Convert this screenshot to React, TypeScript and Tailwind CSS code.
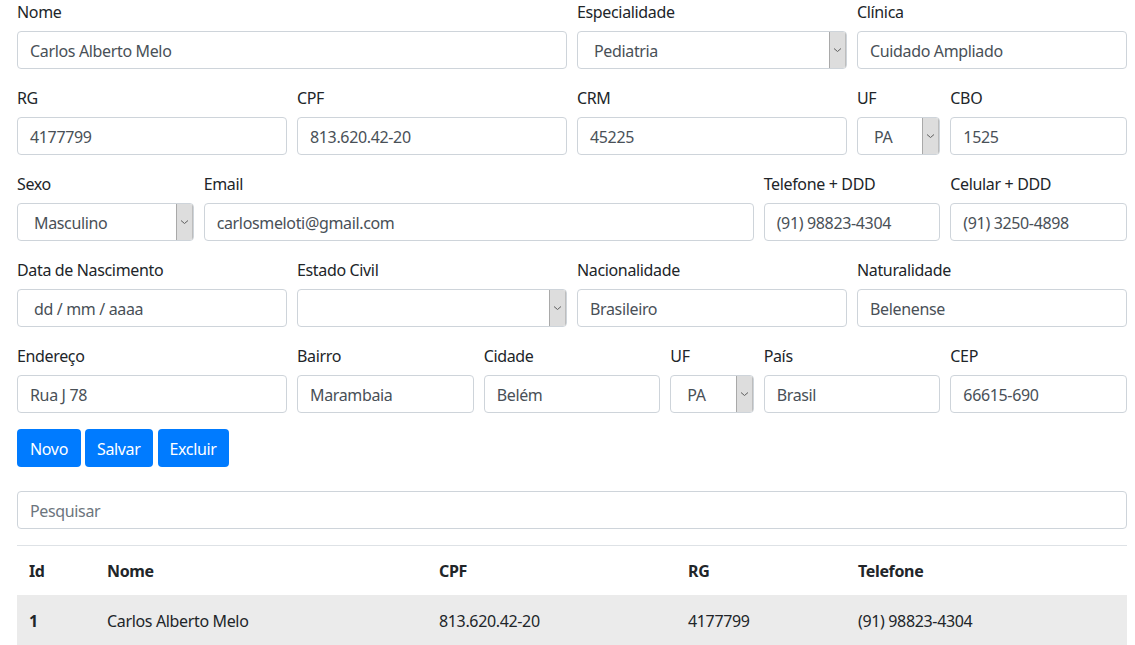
import React from "react";

const font = { fontFamily: '"Segoe UI", "Noto Sans", sans-serif', letterSpacing: "-0.35px" };

function Label({ children }: { children: React.ReactNode }) {
  return <label className="block h-[24px] leading-[24px] mb-[7px] text-[16px] text-[#212529]">{children}</label>;
}

function Input({ value, placeholder }: { value?: string; placeholder?: string }) {
  return (
    <div className="h-[38px] w-full border border-[#ced4da] rounded-[4px] bg-white flex items-center pt-[2px] px-[12px] text-[16px]">
      {value ? (
        <span className="text-[#495057] whitespace-nowrap">{value}</span>
      ) : (
        <span className="text-[#6c757d] whitespace-nowrap">{placeholder}</span>
      )}
    </div>
  );
}

function Select({ value }: { value?: string }) {
  return (
    <div className="h-[38px] w-full border border-[#ced4da] rounded-[4px] bg-white flex items-stretch text-[16px] overflow-hidden">
      <div className="flex-1 flex items-center pt-[2px] pl-[16px] text-[#495057] whitespace-nowrap">{value}</div>
      <div className="w-[17px] bg-[#dddddd] border-l border-[#a9a9a9] border-r border-r-[#bdbdbd] flex items-center justify-center">
        <svg width="9" height="6" viewBox="0 0 9 6">
          <path d="M1 1.5 L4.5 4.5 L8 1.5" fill="none" stroke="#606060" strokeWidth="1" />
        </svg>
      </div>
    </div>
  );
}

function Field({ span, label, children }: { span: string; label: string; children: React.ReactNode }) {
  return (
    <div className={span}>
      <Label>{label}</Label>
      {children}
    </div>
  );
}

export default function App() {
  return (
    <div className="bg-white min-h-[645px] pl-[17px] pt-0" style={font}>
      <div className="w-[1110px]">
        <div className="grid grid-cols-12 gap-x-[10px] mb-[17px]">
          <Field span="col-span-6" label="Nome"><Input value="Carlos Alberto Melo" /></Field>
          <Field span="col-span-3" label="Especialidade"><Select value="Pediatria" /></Field>
          <Field span="col-span-3" label="Clínica"><Input value="Cuidado Ampliado" /></Field>
        </div>
        <div className="grid grid-cols-12 gap-x-[10px] mb-[17px]">
          <Field span="col-span-3" label="RG"><Input value="4177799" /></Field>
          <Field span="col-span-3" label="CPF"><Input value="813.620.42-20" /></Field>
          <Field span="col-span-3" label="CRM"><Input value="45225" /></Field>
          <Field span="col-span-1" label="UF"><Select value="PA" /></Field>
          <Field span="col-span-2" label="CBO"><Input value="1525" /></Field>
        </div>
        <div className="grid grid-cols-12 gap-x-[10px] mb-[17px]">
          <Field span="col-span-2" label="Sexo"><Select value="Masculino" /></Field>
          <Field span="col-span-6" label="Email"><Input value="carlosmeloti@gmail.com" /></Field>
          <Field span="col-span-2" label="Telefone + DDD"><Input value="(91) 98823-4304" /></Field>
          <Field span="col-span-2" label="Celular + DDD"><Input value="(91) 3250-4898" /></Field>
        </div>
        <div className="grid grid-cols-12 gap-x-[10px] mb-[17px]">
          <Field span="col-span-3" label="Data de Nascimento">
            <div className="h-[38px] w-full border border-[#ced4da] rounded-[4px] bg-white flex items-center pt-[2px] pl-[16px] text-[16px] text-[#495057] whitespace-nowrap">
              dd / mm / aaaa
            </div>
          </Field>
          <Field span="col-span-3" label="Estado Civil"><Select value="" /></Field>
          <Field span="col-span-3" label="Nacionalidade"><Input value="Brasileiro" /></Field>
          <Field span="col-span-3" label="Naturalidade"><Input value="Belenense" /></Field>
        </div>
        <div className="grid grid-cols-12 gap-x-[10px]">
          <Field span="col-span-3" label="Endereço"><Input value="Rua J 78" /></Field>
          <Field span="col-span-2" label="Bairro"><Input value="Marambaia" /></Field>
          <Field span="col-span-2" label="Cidade"><Input value="Belém" /></Field>
          <Field span="col-span-1" label="UF"><Select value="PA" /></Field>
          <Field span="col-span-2" label="País"><Input value="Brasil" /></Field>
          <Field span="col-span-2" label="CEP"><Input value="66615-690" /></Field>
        </div>
        <div className="flex gap-[4px] mt-[16px]">
          <button className="h-[38px] w-[64px] pt-[2px] bg-[#007bff] text-white text-[16px] rounded-[4px] leading-[24px]">Novo</button>
          <button className="h-[38px] px-[12px] pt-[2px] bg-[#007bff] text-white text-[16px] rounded-[4px] leading-[24px]">Salvar</button>
          <button className="h-[38px] px-[12px] ml-[1px] pt-[2px] bg-[#007bff] text-white text-[16px] rounded-[4px] leading-[24px]">Excluir</button>
        </div>
        <div className="mt-[24px]">
          <Input placeholder="Pesquisar" />
        </div>
        <table className="mt-[16px] w-full text-[16px] text-[#212529] border-collapse">
          <colgroup>
            <col className="w-[78px]" />
            <col className="w-[332px]" />
            <col className="w-[249px]" />
            <col className="w-[170px]" />
            <col />
          </colgroup>
          <tbody>
            <tr className="border-t border-[#dee2e6]">
              {["Id", "Nome", "CPF", "RG", "Telefone"].map((h) => (
                <th key={h} className="text-left font-bold pt-[13px] pb-[12px] px-[12px] leading-[24px]">{h}</th>
              ))}
            </tr>
            <tr className="bg-[#ebebeb]">
              <td className="pt-[13px] pb-[12px] px-[12px] leading-[26px] font-bold">1</td>
              <td className="pt-[13px] pb-[12px] px-[12px] leading-[26px]">Carlos Alberto Melo</td>
              <td className="pt-[13px] pb-[12px] px-[12px] leading-[26px]">813.620.42-20</td>
              <td className="pt-[13px] pb-[12px] px-[12px] leading-[26px]">4177799</td>
              <td className="pt-[13px] pb-[12px] px-[12px] leading-[26px]">(91) 98823-4304</td>
            </tr>
          </tbody>
        </table>
      </div>
    </div>
  );
}
